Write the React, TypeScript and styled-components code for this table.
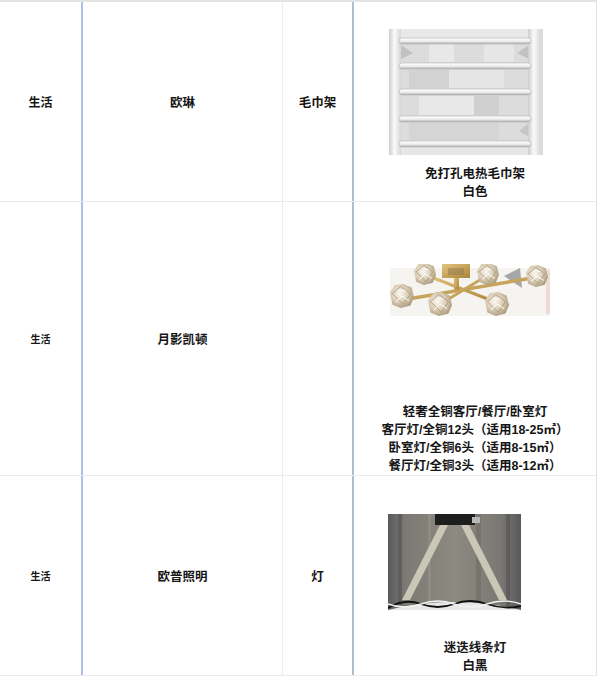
import styled, { createGlobalStyle } from "styled-components";

const GlobalStyle = createGlobalStyle`
  html, body {
    margin: 0;
    padding: 0;
    background: #ffffff;
  }

  body {
    font-family: "Liberation Sans", "Noto Sans CJK SC", sans-serif;
    color: #161616;
  }
`;

const Table = styled.div`
  width: 597px;
  border-top: 2px solid #e4e4e4;
`;

const Row = styled.div<{ $h: number }>`
  display: grid;
  grid-template-columns: 83px 200px 71px 243px;
  height: ${(p) => p.$h}px;
  border-bottom: 1px solid #eaeaea;
  box-sizing: border-box;
`;

const lines = {
  blue: "2px solid #aac0ea",
  gray: "1px solid #ececec",
  teal: "2px solid #a9c1cc",
  edge: "1px solid #e2e2e2",
};

const Cell = styled.div<{ $line: keyof typeof lines }>`
  border-right: ${(p) => lines[p.$line]};
  box-sizing: border-box;
  min-width: 0;
`;

const LabelCell = styled(Cell)<{ $size: number }>`
  display: flex;
  align-items: center;
  justify-content: center;
  font-size: ${(p) => p.$size}px;
  font-weight: 700;
`;

const MediaCell = styled(Cell)<{ $top: number }>`
  display: flex;
  flex-direction: column;
  padding-top: ${(p) => p.$top}px;
`;

const Picture = styled.div<{ $left: number }>`
  padding-left: ${(p) => p.$left}px;
  line-height: 0;
`;

const Caption = styled.div`
  margin-top: auto;
  text-align: center;
  font-size: 12.5px;
  font-weight: 700;
  line-height: 18px;
`;

function TowelRack() {
  const bars = [9, 34, 60, 87, 112];
  return (
    <svg width="154" height="126" viewBox="0 0 154 126">
      <defs>
        <linearGradient id="rail" x1="0" x2="1" y1="0" y2="0">
          <stop offset="0" stopColor="#cdcdcd" />
          <stop offset="0.45" stopColor="#fafafa" />
          <stop offset="1" stopColor="#d6d6d6" />
        </linearGradient>
        <linearGradient id="bar" x1="0" x2="0" y1="0" y2="1">
          <stop offset="0" stopColor="#ffffff" />
          <stop offset="0.55" stopColor="#ededed" />
          <stop offset="1" stopColor="#ababab" />
        </linearGradient>
      </defs>
      <rect width="154" height="126" fill="#dcdcdc" />
      <rect x="12" y="0" width="128" height="10" fill="#e9e9e9" />
      <rect x="40" y="15" width="25" height="18" fill="#e8e8e8" />
      <rect x="95" y="15" width="30" height="18" fill="#e6e6e6" />
      <rect x="20" y="41" width="50" height="18" fill="#d2d2d2" />
      <rect x="60" y="41" width="55" height="18" fill="#e5e5e5" />
      <rect x="30" y="67" width="70" height="19" fill="#e8e8e8" />
      <rect x="85" y="67" width="25" height="19" fill="#d0d0d0" />
      <rect x="20" y="94" width="90" height="17" fill="#d5d5d5" />
      <rect x="12" y="118" width="128" height="8" fill="#e6e6e6" />
      <polygon points="12,16 24,24 12,30" fill="#c2c2c2" />
      <polygon points="140,16 128,24 140,30" fill="#c2c2c2" />
      <polygon points="140,94 130,102 140,108" fill="#c6c6c6" />
      <rect x="0" y="0" width="12" height="126" fill="url(#rail)" />
      <rect x="139" y="0" width="13" height="126" fill="url(#rail)" />
      {bars.map((y) => (
        <rect
          key={y}
          x="10"
          y={y}
          width="132"
          height="6"
          rx="3"
          fill="url(#bar)"
          stroke="#b4b4b4"
          strokeWidth="0.6"
        />
      ))}
    </svg>
  );
}

function Crystal({ x, y, r }: { x: number; y: number; r: number }) {
  const pts = [
    [-1, -0.3],
    [-0.6, -0.9],
    [0.1, -1],
    [0.8, -0.7],
    [1, 0.1],
    [0.7, 0.8],
    [-0.1, 1],
    [-0.8, 0.7],
  ]
    .map(([dx, dy]) => `${x + dx * r},${y + dy * r}`)
    .join(" ");
  return (
    <g>
      <polygon points={pts} fill="url(#glass)" />
      <path
        d={`M${x - r * 0.8},${y - r * 0.2} L${x - r * 0.1},${y - r * 0.8} L${x + r * 0.7},${y - r * 0.2} L${x + r * 0.1},${y + r * 0.7} Z`}
        fill="none"
        stroke="#a8947a"
        strokeWidth="0.8"
      />
      <path
        d={`M${x - r * 0.5},${y + r * 0.5} L${x},${y} L${x + r * 0.6},${y + r * 0.4} M${x - r * 0.3},${y - r * 0.5} L${x + r * 0.3},${y - r * 0.4}`}
        fill="none"
        stroke="#ffffff"
        strokeWidth="1"
      />
    </g>
  );
}

function Chandelier() {
  return (
    <svg width="160" height="54" viewBox="0 0 160 54">
      <defs>
        <linearGradient id="gold" x1="0" x2="1" y1="0" y2="1">
          <stop offset="0" stopColor="#e4c47c" />
          <stop offset="1" stopColor="#a9843a" />
        </linearGradient>
        <radialGradient id="glass" cx="0.4" cy="0.4" r="0.65">
          <stop offset="0" stopColor="#fbf8f2" />
          <stop offset="0.55" stopColor="#d9ccb4" />
          <stop offset="1" stopColor="#a89678" />
        </radialGradient>
      </defs>
      <rect x="0" y="4" width="160" height="48" fill="#f6f4f1" />
      <rect x="156" y="6" width="4" height="44" fill="#eedcd4" />
      <polygon points="114,12 130,4 132,24" fill="#a7a7a7" />
      <line x1="12" y1="36" x2="148" y2="13" stroke="url(#gold)" strokeWidth="3.5" />
      <line x1="36" y1="11" x2="108" y2="39" stroke="url(#gold)" strokeWidth="3" />
      <line x1="98" y1="11" x2="52" y2="39" stroke="url(#gold)" strokeWidth="3" />
      <rect x="64" y="12" width="5" height="14" fill="url(#gold)" />
      <rect x="52" y="0" width="28" height="14" fill="url(#gold)" />
      <rect x="58" y="4" width="16" height="7" fill="#8f7a52" opacity="0.5" />
      <Crystal x={12} y={32} r={12} />
      <Crystal x={35} y={10} r={11} />
      <Crystal x={50} y={40} r={12} />
      <Crystal x={98} y={10} r={11} />
      <Crystal x={107} y={40} r={12} />
      <Crystal x={147} y={12} r={11} />
    </svg>
  );
}

function StripLamp() {
  return (
    <svg width="133" height="96" viewBox="0 0 133 96">
      <defs>
        <linearGradient id="wall" x1="0" x2="1" y1="0" y2="0">
          <stop offset="0" stopColor="#5a5a5a" />
          <stop offset="0.12" stopColor="#7b7974" />
          <stop offset="0.5" stopColor="#8d8a80" />
          <stop offset="0.85" stopColor="#7a7873" />
          <stop offset="1" stopColor="#595959" />
        </linearGradient>
      </defs>
      <rect width="133" height="96" fill="url(#wall)" />
      <rect x="10" y="0" width="4" height="96" fill="#4c4c4c" opacity="0.5" />
      <rect x="40" y="0" width="3" height="96" fill="#9a978e" opacity="0.5" />
      <rect x="88" y="0" width="5" height="96" fill="#6a6862" opacity="0.5" />
      <rect x="118" y="0" width="4" height="96" fill="#4d4d4d" opacity="0.5" />
      <rect x="47" y="0" width="40" height="11" fill="#1e1e1e" />
      <rect x="84" y="3" width="8" height="6" fill="#b8b8b8" />
      <polygon points="52,11 60,11 22,86 14,86" fill="#cbc7b7" />
      <polygon points="73,11 81,11 119,86 111,86" fill="#cbc7b7" />
      <path d="M0,96 Q66,80 133,96 Z" fill="#e8e8e8" />
      <path
        d="M0,94 Q16,84 33,90 T66,90 T99,90 T133,92"
        fill="none"
        stroke="#111111"
        strokeWidth="1.8"
      />
      <path
        d="M0,90 Q16,96 33,90 T66,90 T99,90 T133,90"
        fill="none"
        stroke="#f2f2f2"
        strokeWidth="1.4"
      />
    </svg>
  );
}

export default function App() {
  return (
    <>
      <GlobalStyle />
      <Table>
        <Row $h={200}>
          <LabelCell $line="blue" $size={12}>生活</LabelCell>
          <LabelCell $line="gray" $size={12.5}>欧琳</LabelCell>
          <LabelCell $line="teal" $size={12.5}>毛巾架</LabelCell>
          <MediaCell $line="edge" $top={27}>
            <Picture $left={35}>
              <TowelRack />
            </Picture>
            <Caption>
              免打孔电热毛巾架
              <br />
              白色
            </Caption>
          </MediaCell>
        </Row>
        <Row $h={274}>
          <LabelCell $line="blue" $size={10}>生活</LabelCell>
          <LabelCell $line="gray" $size={12.5}>月影凯顿</LabelCell>
          <LabelCell $line="teal" $size={12.5} />
          <MediaCell $line="edge" $top={62}>
            <Picture $left={36}>
              <Chandelier />
            </Picture>
            <Caption>
              轻奢全铜客厅/餐厅/卧室灯
              <br />
              客厅灯/全铜12头（适用18-25㎡）
              <br />
              卧室灯/全铜6头（适用8-15㎡）
              <br />
              餐厅灯/全铜3头（适用8-12㎡）
            </Caption>
          </MediaCell>
        </Row>
        <Row $h={200}>
          <LabelCell $line="blue" $size={10}>生活</LabelCell>
          <LabelCell $line="gray" $size={12.5}>欧普照明</LabelCell>
          <LabelCell $line="teal" $size={12.5}>灯</LabelCell>
          <MediaCell $line="edge" $top={38}>
            <Picture $left={34}>
              <StripLamp />
            </Picture>
            <Caption>
              迷迭线条灯
              <br />
              白黑
            </Caption>
          </MediaCell>
        </Row>
      </Table>
    </>
  );
}
